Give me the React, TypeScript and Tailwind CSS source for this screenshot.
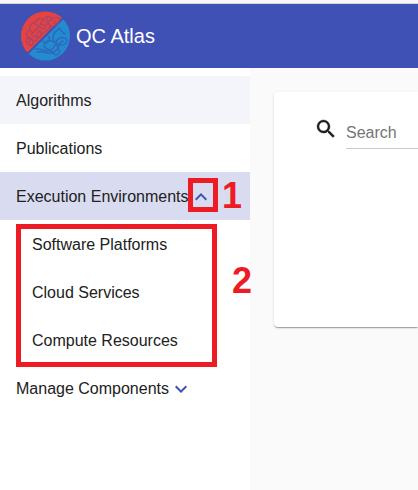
import React from "react";

function Logo() {
  return (
    <svg viewBox="0 0 50 50" className="size-[50px] shrink-0" role="img" aria-label="QC Atlas logo" fill="none">
      <clipPath id="disc">
        <circle cx="24.5" cy="25" r="24.5" />
      </clipPath>
      <g clipPath="url(#disc)">
        <path d="M-10 58V-10H58Z" fill="#e4433f" />
        <path d="M-10 60.5H60.5V-10Z" fill="#238bd0" />
        <path d="M-10 59.2L59.2 -10" stroke="#3f51b5" strokeWidth="1.4" />
      </g>
      <g stroke="#9a4678" strokeWidth="1.1" strokeLinecap="round">
        <path d="M9 34c-4-1-5-5-2-8-3-3-1-7 2-7-1-4 2-8 5-7 1-4 5-6 8-3 3-5 8-4 9-1 5-3 8-1 8 2" />
        <path d="M9 34c3 1 4-2 3-4 3 1 5-1 4-4 3 1 5-1 4-4 3 1 5-1 5-3 3 0 5-1 4-4 3 1 6 0 9-4" />
        <path d="M7 27c2-1 4 0 4 2M9 20c3 0 3 3 1 4M14 13c3 0 4 3 2 5s-4 1-3 4M22 10c-3 1-3 4 0 4s3 3 0 4M31 9c-3 0-5 2-3 4M17 23c-1-2 1-4 3-3M25 14c1-2 4-1 4 1M12 26c1-2 4-2 4 0M35 10c-2 0-3 2-1 3M19 14c-1 2 0 3 2 3M9 31c-1-1-1-3 1-3M27 8c-2 0-3 2-1 3" />
      </g>
      <g stroke="#2d69bd" strokeWidth="1.5" strokeLinecap="round">
        <path d="M14 38c7-1 10 4 16 1s3-10 9-12 9 3 5 6-9-1-13-3-8 2-8 5 5 2 7 5 6 6 8 2-3-8-5-12-2-8 5-12" />
        <path d="M16 41c8-2 10 4 17 0s4-10 9-11M38 17c3 2 3 5 6 6M27 25c2 2 2 4 0 6s-4 1-5-1" />
      </g>
    </svg>
  );
}

function Chevron({ up = false }: { up?: boolean }) {
  return (
    <svg viewBox="0 0 24 24" className="size-6 shrink-0 fill-[#3f51b5]" aria-hidden="true">
      <path
        d={
          up
            ? "M12 8l-6 6 1.41 1.41L12 10.83l4.59 4.58L18 14z"
            : "M16.59 8.59L12 13.17 7.41 8.59 6 10l6 6 6-6z"
        }
      />
    </svg>
  );
}

const children = ["Software Platforms", "Cloud Services", "Compute Resources"];

export default function App() {
  return (
    <div className="flex min-h-screen flex-col bg-[#fafafa] font-['Liberation_Sans',Arial,sans-serif] text-base text-[#212121]">
      <div className="h-1 border-b border-[#d5d5dc] bg-[#f6f6f8]" />
      <header className="flex h-16 items-center gap-[5px] bg-[#3f51b5] pl-[21px] text-white">
        <Logo />
        <h1 className="text-xl">QC Atlas</h1>
      </header>
      <div className="flex grow">
        <nav className="w-[250px] shrink-0 bg-white pt-2">
          <ul>
            <li>
              <a href="#algorithms" className="flex h-12 items-center bg-[#f4f5fb] px-4 pt-0.5">Algorithms</a>
            </li>
            <li>
              <a href="#publications" className="flex h-12 items-center px-4 pt-0.5">Publications</a>
            </li>
            <li>
              <button type="button" aria-expanded="true" className="relative flex h-12 w-full items-center bg-[#d9dcf0] pt-0.5 pl-4 whitespace-nowrap">
                Execution Environments
                <Chevron up />
                <span className="absolute top-[6px] left-[188px] h-[34px] w-[30px] border-5 border-[#ed1c24]" />
                <span className="absolute top-1 left-[222px] text-4xl font-bold text-[#ed1c24]">1</span>
              </button>
              <div className="relative">
                <ul>
                  {children.map((name) => (
                    <li key={name}>
                      <a href="#environments" className="flex h-12 items-center px-8 pt-0.5">{name}</a>
                    </li>
                  ))}
                </ul>
                <span className="pointer-events-none absolute top-1 left-4 h-[143px] w-[201px] border-5 border-[#ed1c24]" />
                <span className="absolute top-[41px] left-[232px] text-4xl font-bold text-[#ed1c24]">2</span>
              </div>
            </li>
            <li>
              <button type="button" aria-expanded="false" className="flex h-12 w-full items-center pt-0.5 pl-4 whitespace-nowrap">
                Manage Components
                <Chevron />
              </button>
            </li>
          </ul>
        </nav>
        <main className="min-w-0 grow overflow-hidden pt-6 pl-6">
          <section className="h-[235px] rounded-l bg-white pt-[25px] pl-10 shadow-[0_2px_1px_-1px_rgba(0,0,0,0.2),0_1px_1px_0_rgba(0,0,0,0.14),0_1px_3px_0_rgba(0,0,0,0.12)]">
            <label className="flex items-start gap-2">
              <svg viewBox="0 0 24 24" className="size-6 shrink-0 fill-[#1c1c1c] stroke-[#1c1c1c] stroke-[0.4]" role="img" aria-label="Search">
                <path d="M15.5 14h-.79l-.28-.27A6.471 6.471 0 0 0 16 9.5 6.5 6.5 0 1 0 9.5 16c1.61 0 3.09-.59 4.23-1.57l.27.28v.79l5 4.99L20.49 19l-4.99-5zm-6 0C7.01 14 5 11.99 5 9.5S7.01 5 9.5 5 14 7.01 14 9.5 11.99 14 9.5 14z" />
              </svg>
              <input
                type="text"
                placeholder="Search"
                className="h-8 min-w-0 grow border-b border-[#c9c9cf] bg-transparent outline-none placeholder:text-[#757575]"
              />
            </label>
          </section>
        </main>
      </div>
    </div>
  );
}
